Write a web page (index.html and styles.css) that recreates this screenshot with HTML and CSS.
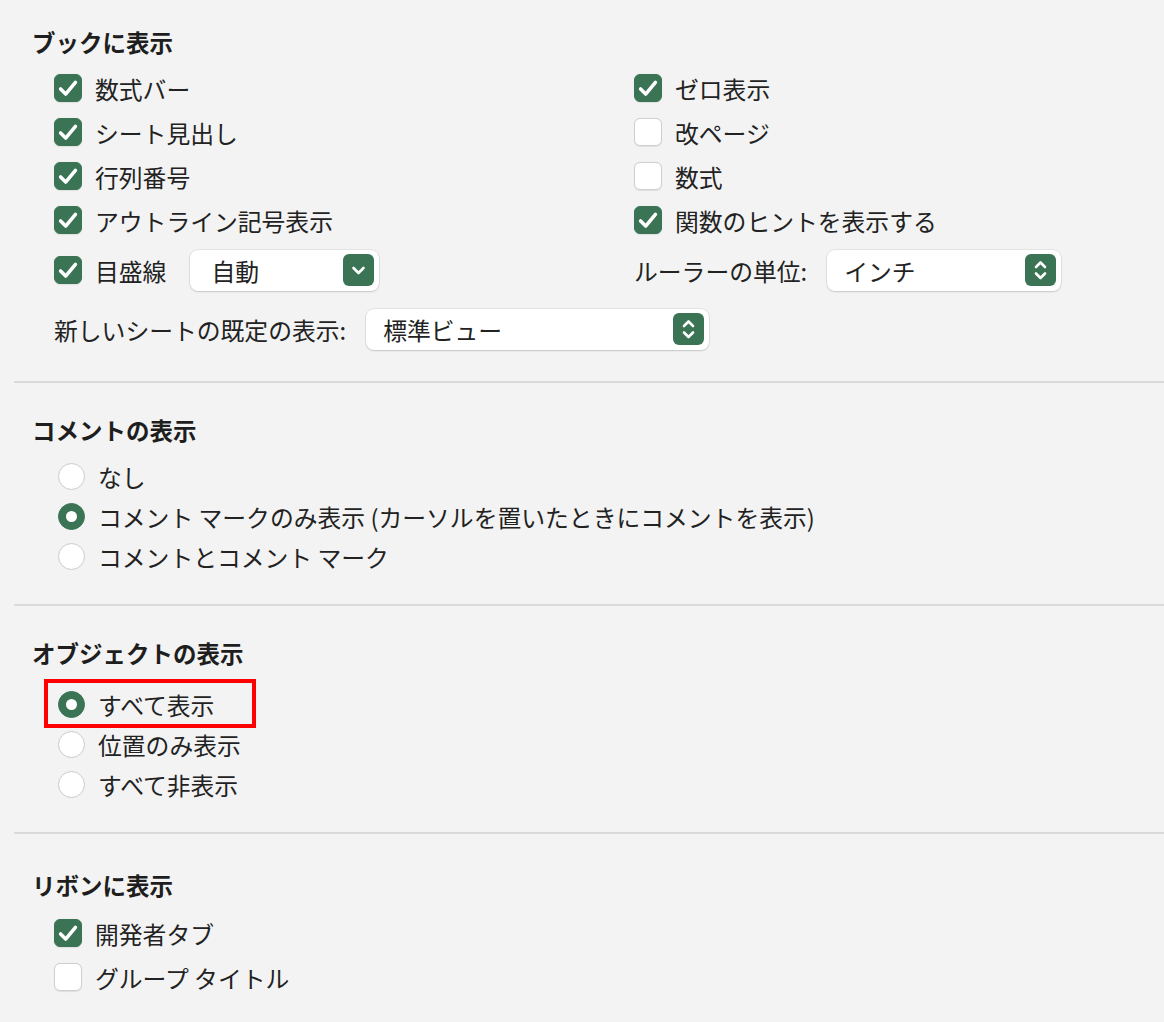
FILE: index.html
```html
<!DOCTYPE html>
<html lang="ja">
<head>
    <meta charset="UTF-8">
    <meta name="viewport" content="width=device-width, initial-scale=1.0">
    <title>表示</title>
    <link rel="stylesheet" href="styles.css">
</head>
<body>
    <div class="prefs">
        <!-- ブック -->
        <section class="group group-first">
            <h2 class="group-title">ブックに表示</h2>
            <div class="opts-grid">
                <label class="check"><span class="box on"><svg viewBox="0 0 28 28"><path d="M6 15 L11.5 20.5 L22 8"/></svg></span>数式バー</label>
                <label class="check"><span class="box on"><svg viewBox="0 0 28 28"><path d="M6 15 L11.5 20.5 L22 8"/></svg></span>ゼロ表示</label>
                <label class="check"><span class="box on"><svg viewBox="0 0 28 28"><path d="M6 15 L11.5 20.5 L22 8"/></svg></span>シート見出し</label>
                <label class="check"><span class="box"></span>改ページ</label>
                <label class="check"><span class="box on"><svg viewBox="0 0 28 28"><path d="M6 15 L11.5 20.5 L22 8"/></svg></span>行列番号</label>
                <label class="check"><span class="box"></span>数式</label>
                <label class="check"><span class="box on"><svg viewBox="0 0 28 28"><path d="M6 15 L11.5 20.5 L22 8"/></svg></span>アウトライン記号表示</label>
                <label class="check"><span class="box on"><svg viewBox="0 0 28 28"><path d="M6 15 L11.5 20.5 L22 8"/></svg></span>関数のヒントを表示する</label>
            </div>

            <div class="opts-grid select-row">
                <div class="field">
                    <label class="check"><span class="box on"><svg viewBox="0 0 28 28"><path d="M6 15 L11.5 20.5 L22 8"/></svg></span>目盛線</label>
                    <div class="select select-grid">
                        <span class="select-value">自動</span>
                        <span class="select-btn"><svg viewBox="0 0 31 32"><path d="M10.5 14 L15.5 19 L20.5 14"/></svg></span>
                    </div>
                </div>
                <div class="field">
                    <span class="field-label">ルーラーの単位:</span>
                    <div class="select select-ruler">
                        <span class="select-value">インチ</span>
                        <span class="select-btn"><svg viewBox="0 0 31 32"><path d="M11 13 L15.5 8.5 L20 13"/><path d="M11 19.5 L15.5 24 L20 19.5"/></svg></span>
                    </div>
                </div>
            </div>

            <div class="field view-row">
                <span class="field-label">新しいシートの既定の表示:</span>
                <div class="select select-view">
                    <span class="select-value">標準ビュー</span>
                    <span class="select-btn"><svg viewBox="0 0 31 32"><path d="M11 13 L15.5 8.5 L20 13"/><path d="M11 19.5 L15.5 24 L20 19.5"/></svg></span>
                </div>
            </div>
        </section>

        <!-- コメント -->
        <section class="group">
            <h2 class="group-title">コメントの表示</h2>
            <div class="radios">
                <label class="radio"><span class="dot"></span>なし</label>
                <label class="radio"><span class="dot on"></span>コメント マークのみ表示 (カーソルを置いたときにコメントを表示)</label>
                <label class="radio"><span class="dot"></span>コメントとコメント マーク</label>
            </div>
        </section>

        <!-- オブジェクト -->
        <section class="group group-objects">
            <h2 class="group-title">オブジェクトの表示</h2>
            <div class="radios">
                <label class="radio marked"><span class="dot on"></span>すべて表示</label>
                <label class="radio"><span class="dot"></span>位置のみ表示</label>
                <label class="radio"><span class="dot"></span>すべて非表示</label>
            </div>
        </section>

        <!-- リボン -->
        <section class="group group-last">
            <h2 class="group-title">リボンに表示</h2>
            <div class="checks">
                <label class="check"><span class="box on"><svg viewBox="0 0 28 28"><path d="M6 15 L11.5 20.5 L22 8"/></svg></span>開発者タブ</label>
                <label class="check"><span class="box"></span>グループ タイトル</label>
            </div>
        </section>
    </div>
</body>
</html>
```

FILE: styles.css
```css
body {
    margin: 0;
    background: #f3f3f3;
    color: #222;
    font-family: "Noto Sans CJK JP", "Noto Sans", sans-serif;
    font-size: 23.8px;
}

.prefs {
    margin-left: 14px;
}

.group {
    padding: 31px 0 28px 18px;
    border-bottom: 2px solid #dadada;
}

.group-first {
    padding-top: 26px;
    padding-bottom: 30px;
}

.group-objects .group-title {
    margin-bottom: 15px;
}

.group-last {
    border-bottom: none;
    padding-top: 35px;
}

.group-title {
    margin: 0 0 10px;
    font-size: 23.5px;
    font-weight: bold;
    line-height: 32px;
    color: #1e1e1e;
}

.group-first .group-title {
    margin-bottom: 8px;
}

/* checkbox rows */
.opts-grid {
    display: grid;
    grid-template-columns: 580px 1fr;
    padding-left: 22px;
}

.checks {
    padding-left: 22px;
}

.check {
    display: flex;
    align-items: center;
    gap: 13px;
    height: 44px;
    white-space: nowrap;
}

.box {
    width: 28px;
    height: 28px;
    box-sizing: border-box;
    border-radius: 6px;
    background: #fff;
    border: 1px solid #cfcfcf;
    box-shadow: 0 0.5px 1px rgba(0, 0, 0, 0.08);
    flex-shrink: 0;
}

.box.on {
    background: #3a7454;
    border-color: #3a7454;
}

.box svg {
    display: block;
    width: 26px;
    height: 26px;
}

.box path {
    fill: none;
    stroke: #fff;
    stroke-width: 3.8;
    stroke-linecap: round;
    stroke-linejoin: round;
}

/* select rows */
.select-row {
    margin-top: 6px;
}

.field {
    display: flex;
    align-items: center;
    height: 44px;
}

.field-label {
    margin-right: 20px;
    white-space: nowrap;
}

.field .check {
    margin-right: 24px;
}

.view-row {
    margin-left: 22px;
    margin-top: 15px;
}

.select {
    display: flex;
    align-items: center;
    justify-content: space-between;
    height: 41px;
    box-sizing: border-box;
    padding: 0 5px 0 17px;
    background: #fff;
    border-radius: 8px;
    box-shadow: 0 0 0 0.5px rgba(0, 0, 0, 0.12), 0 1px 2px rgba(0, 0, 0, 0.14);
}

.select-grid {
    width: 189px;
    padding-left: 21px;
}

.select-ruler {
    width: 234px;
}

.select-view {
    width: 343px;
}

.select-value {
    white-space: nowrap;
}

.select-btn {
    width: 31px;
    height: 32px;
    border-radius: 6px;
    background: #3a7454;
}

.select-btn svg {
    display: block;
    width: 31px;
    height: 32px;
}

.select-btn path {
    fill: none;
    stroke: #fff;
    stroke-width: 2.6;
    stroke-linecap: round;
    stroke-linejoin: round;
}

/* radio rows */
.radios {
    padding-left: 26px;
}

.radio {
    display: flex;
    align-items: center;
    gap: 13px;
    height: 40px;
    white-space: nowrap;
}

.dot {
    width: 27px;
    height: 27px;
    box-sizing: border-box;
    border-radius: 50%;
    background: #fff;
    border: 1px solid #cbcbcb;
    flex-shrink: 0;
}

.dot.on {
    background: #3a7454;
    border-color: #3a7454;
    display: flex;
    align-items: center;
    justify-content: center;
}

.dot.on::after {
    content: "";
    width: 11px;
    height: 11px;
    border-radius: 50%;
    background: #fff;
}

/* red frame drawn round the chosen option */
.marked {
    position: relative;
    width: fit-content;
}

.marked::after {
    content: "";
    position: absolute;
    left: -14px;
    top: -5px;
    width: 212px;
    height: 49px;
    box-sizing: border-box;
    border: 4px solid #ff0000;
}
```
